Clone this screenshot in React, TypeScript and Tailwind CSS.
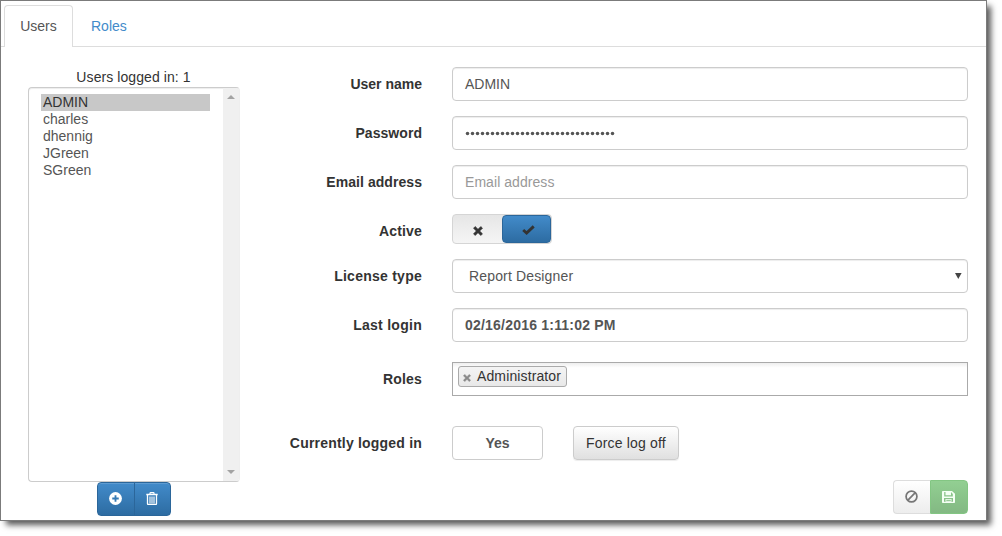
import type { ReactNode } from "react";

const users = ["ADMIN", "charles", "dhennig", "JGreen", "SGreen"];

const field =
  "flex h-[34px] w-[516px] items-center rounded border border-[#ccc] bg-white px-3 text-[#555] shadow-[inset_0_1px_1px_rgba(0,0,0,0.075)]";

function Row({ label, className, spacing, children }: { label: string; className: string; spacing: string; children: ReactNode }) {
  return (
    <div className={`flex items-center ${className}`}>
      <span className={`mr-[30px] w-[152px] text-right font-bold whitespace-nowrap text-[#333] ${spacing}`}>{label}</span>
      {children}
    </div>
  );
}

function Cross({ size, color }: { size: number; color: string }) {
  return (
    <svg width={size} height={size} viewBox="0 0 10 10">
      <path d="M2.2 0.5 5 3.3 7.8 0.5 9.5 2.2 6.7 5 9.5 7.8 7.8 9.5 5 6.7 2.2 9.5 0.5 7.8 3.3 5 0.5 2.2Z" fill={color} stroke={color} strokeWidth=".6" strokeLinejoin="round" />
    </svg>
  );
}

function UserList() {
  return (
    <div className="ml-[27px] flex w-[212px] flex-col items-center">
      <div className="mt-[20px] h-5 pr-px tracking-[0.08px] text-[#333]">Users logged in: 1</div>
      <div className="flex h-[395px] w-full overflow-hidden rounded border border-[#ccc] border-r-[#eee] bg-white shadow-[inset_0_1px_1px_rgba(0,0,0,0.075)]">
        <ul className="flex-1 pt-1.5 pl-3 leading-[17px] text-[#555]">
          {users.map((name, i) => (
            <li key={name} className={`h-[17px] w-[169px] pl-0.5 ${i === 0 ? "bg-[#c8c8c8] text-[#333]" : ""}`}>
              {name}
            </li>
          ))}
        </ul>
        <div className="flex w-4 flex-col items-center justify-between bg-[#f0f0f0] pt-[7px] pb-[7px]">
          <svg width="8" height="4" viewBox="0 0 8 4"><path d="M4 0 8 4H0Z" fill="#a3a3a3" /></svg>
          <svg width="8" height="4" viewBox="0 0 8 4"><path d="M4 4 8 0H0Z" fill="#a3a3a3" /></svg>
        </div>
      </div>
      <div className="flex h-[34px] w-[74px] overflow-hidden rounded border border-[#2b669a] bg-linear-to-b from-[#428bca] to-[#2d6ca2] shadow-[inset_0_1px_0_rgba(255,255,255,0.15)]">
        <button className="flex w-[37px] items-center justify-center border-r border-[#2b669a] pr-px pb-px">
          <svg width="13" height="13" viewBox="0 0 14 14">
            <circle cx="7" cy="7" r="6.9" fill="#fff" />
            <path d="M7 3.5v7M3.5 7h7" stroke="#357ab5" strokeWidth="2" />
          </svg>
        </button>
        <button className="flex flex-1 items-center justify-center pr-px pb-px">
          <svg width="12" height="13" viewBox="0 0 12 13" fill="none" stroke="#fff">
            <path d="M4 2V1.3Q4 .6 4.5.6h3Q8 .6 8 1.3V2" strokeWidth="1.2" />
            <path d="M.3 2.5h11.4" strokeWidth="1.4" />
            <path d="M1.5 3v8.7q0 .8.8.8h7.4q.8 0 .8-.8V3" strokeWidth="1.3" />
            <path d="M4 4.5v7M6 4.5v7M8 4.5v7" strokeWidth="1.1" />
          </svg>
        </button>
      </div>
    </div>
  );
}

function UserForm() {
  return (
    <div className="ml-[30px] flex w-[698px] flex-col pt-[20px]">
      <Row label="User name" spacing="" className="h-[34px]"><div className={field}>ADMIN</div></Row>
      <Row label="Password" spacing="tracking-[0.05px]" className="mt-[15px] h-[34px]">
        <div className={field}>
          <svg width="151" height="6" viewBox="0 0 151 6" fill="#555">
            {Array.from({ length: 30 }, (_, i) => <circle key={i} cx={2.5 + i * 5} cy="3.5" r="1.75" />)}
          </svg>
        </div>
      </Row>
      <Row label="Email address" spacing="tracking-[0.06px]" className="mt-[15px] h-[34px]">
        <div className={field}><span className="tracking-[0.06px] text-[#999]">Email address</span></div>
      </Row>
      <Row label="Active" spacing="tracking-[0.16px]" className="mt-[15px] h-[30px] [&>span]:mt-[4px]">
        <div className="flex h-[30px] w-[100px] rounded border border-[#d5d5d5] bg-linear-to-b from-[#e6e6e6] to-[#f5f5f5]">
          <span className="flex w-[49px] items-center justify-center pt-[3px] pl-px"><Cross size={10} color="#333" /></span>
          <span className="flex h-[28px] w-[49px] items-center justify-center rounded border border-[#2b669a] bg-linear-to-b from-[#428bca] to-[#2d6ca2] pt-0.5 pl-[3px]">
            <svg width="13" height="10" viewBox="0 0 13 10"><path d="M1.2 5 4.6 8 11.7 1.4" fill="none" stroke="#333" strokeWidth="2.9" /></svg>
          </span>
        </div>
      </Row>
      <Row label="License type" spacing="tracking-[0.25px]" className="mt-[15px] h-[34px]">
        <div className={field}>
          <span className="flex-1 pl-1 tracking-[0.15px]">Report Designer</span>
          <svg width="7" height="6" viewBox="0 0 7 6" className="-mr-[7px]"><path d="M0 0h6.6L3.3 6Z" fill="#444" /></svg>
        </div>
      </Row>
      <Row label="Last login" spacing="tracking-[0.27px]" className="mt-[15px] h-[34px]">
        <div className={`${field} font-bold tracking-[0.21px]`}>02/16/2016 1:11:02 PM</div>
      </Row>
      <Row label="Roles" spacing="tracking-[0.2px]" className="mt-[20px] h-[34px]">
        <div className="h-[34px] w-[516px] border border-[#aaa] bg-linear-to-b from-[#eee] via-white via-15% to-white pt-[3px] pl-[5px]">
          <div className="flex h-[21px] w-[109px] items-center rounded-[3px] border border-[#aaa] bg-linear-to-b from-[#f4f4f4] to-[#e8e8e8] pl-[4px] text-[#333]">
            <span className="mt-[3px] mr-[6px]"><Cross size={8} color="#888" /></span>
            <span className="pb-0.5 tracking-[0.12px]">Administrator</span>
          </div>
        </div>
      </Row>
      <Row label="Currently logged in" spacing="tracking-[0.2px]" className="mt-[30px] h-[34px]">
        <div className="flex h-[34px] w-[91px] items-center justify-center rounded border border-[#ccc] font-bold text-[#555]">Yes</div>
        <button className="ml-[30px] h-[34px] w-[106px] rounded border border-[#ccc] bg-linear-to-b from-white to-[#e0e0e0] tracking-[0.17px] text-[#333] shadow-[0_1px_1px_rgba(0,0,0,0.075)]">Force log off</button>
      </Row>
      <div className="mt-[20px] flex justify-end">
        <button className="flex h-[34px] w-[37px] items-center justify-center rounded-l border border-r-0 border-[#ddd] bg-linear-to-b from-white to-[#ededed] pr-px pb-px">
          <svg width="13" height="13" viewBox="0 0 12 12" fill="none" stroke="#777" strokeWidth="1.6"><circle cx="6" cy="6" r="5" /><path d="m2.5 9.5 7-7" /></svg>
        </button>
        <button className="flex h-[34px] w-[38px] items-center justify-center rounded-r border border-[#83c683] bg-linear-to-b from-[#92cf92] to-[#83b983] pr-px">
          <svg width="13" height="12" viewBox="0 0 13 12">
            <path fillRule="evenodd" d="M.8 0H10l3 2.8v8.4q0 .8-.8.8H.8q-.8 0-.8-.8V.8Q0 0 .8 0ZM2.2 1v4.5h8.6V3L9 1v3.3H3.5V1ZM2 7v3.8h9V7Z" fill="#f5fff5" />
            <path d="M6 1h1.7v2.4H6ZM3.5 8h6v2.8h-6Z" fill="#f5fff5" /><path d="M4.3 9.3h4.5" stroke="#85bd85" />
          </svg>
        </button>
      </div>
    </div>
  );
}

export default function App() {
  return (
    <div className="h-[536px] w-[1002px] overflow-hidden bg-white font-['Liberation_Sans',Arial,sans-serif] text-[14px] leading-5">
      <main className="flex h-[521px] w-[987px] flex-col border border-[#7b7b7b] bg-white shadow-[5px_5px_6px_-1px_rgba(0,0,0,0.65)]">
        <nav className="flex h-[46px] shrink-0 items-end border-b border-[#ddd] pl-[3px]">
          <a className="-mb-px flex h-[42px] w-[69px] items-center justify-center rounded-t border border-b-0 border-[#ddd] bg-white pb-0.5 text-[#555]">Users</a>
          <a className="flex h-[41px] items-center pl-[18px] text-[#428bca]">Roles</a>
        </nav>
        <div className="flex">
          <UserList />
          <UserForm />
        </div>
      </main>
    </div>
  );
}
